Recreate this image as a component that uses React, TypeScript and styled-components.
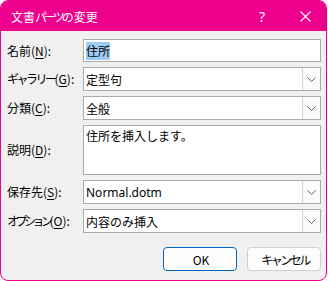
import React from "react";
import styled, { createGlobalStyle } from "styled-components";

const GlobalStyle = createGlobalStyle`
  body {
    margin: 0;
    background: #ffffff;
    font-family: "Noto Sans CJK JP", "Noto Sans", sans-serif;
  }
`;

const Dialog = styled.div`
  width: 327px;
  height: 281px;
  box-sizing: border-box;
  border: 1px solid #ec008c;
  border-radius: 8px;
  overflow: hidden;
  background: #f0f0f0;
  display: flex;
  flex-direction: column;
  font-size: 12px;
  color: #000;
`;

const TitleBar = styled.header`
  height: 30px;
  flex-shrink: 0;
  background: #ec008c;
  color: #fff;
  display: flex;
  align-items: center;
`;

const Title = styled.div`
  flex: 1;
  padding-left: 10px;
  font-size: 12px;
`;

const CaptionButton = styled.div<{ $w: number }>`
  width: ${(p) => p.$w}px;
  height: 30px;
  display: flex;
  align-items: center;
  justify-content: center;
  font-family: "Noto Sans", sans-serif;
  font-size: 14px;
`;

/* katakana runs are set tighter, like the proportional kana of the UI font */
const Kana = styled.span<{ $tight?: number }>`
  letter-spacing: ${(p) => p.$tight ?? -2.5}px;
`;

const Body = styled.div`
  padding: 8px 4px 0 6px;
`;

const Form = styled.div`
  display: grid;
  grid-template-columns: 76px 238px;
  row-gap: 5px;
  align-items: center;
`;

const Label = styled.label`
  white-space: nowrap;
  line-height: 16px;
`;

const Key = styled.span`
  text-decoration: underline;
  text-underline-offset: 2px;
`;

const TextBox = styled.div<{ $h: number; $multi?: boolean }>`
  height: ${(p) => p.$h}px;
  box-sizing: border-box;
  border: 1px solid #ababab;
  background: #fff;
  display: flex;
  align-items: ${(p) => (p.$multi ? "flex-start" : "center")};
  padding: ${(p) => (p.$multi ? "2px 2px 0" : "0 2px")};
  line-height: 16px;
`;

const Selected = styled.span`
  background: #9dcbf2;
  line-height: 18px;
`;

const Combo = styled.div`
  height: 24px;
  box-sizing: border-box;
  border: 1px solid #ababab;
  background: #fff;
  display: flex;
  align-items: stretch;
`;

const ComboValue = styled.div<{ $latin?: boolean }>`
  flex: 1;
  display: flex;
  align-items: center;
  padding-left: 2px;
  ${(p) => (p.$latin ? `font-family: "Noto Sans", sans-serif;` : "")}
`;

const DropButton = styled.div`
  width: 17px;
  border-left: 1px solid #d2d2d2;
  background: #fbfbfb;
  display: flex;
  align-items: center;
  justify-content: center;
`;

const ButtonRow = styled.div`
  display: flex;
  justify-content: flex-end;
  gap: 10px;
  margin-top: 14px;
  padding-right: 1px;
`;

const Button = styled.button<{ $primary?: boolean }>`
  width: 74px;
  height: 24px;
  box-sizing: border-box;
  border: 1px solid ${(p) => (p.$primary ? "#0067c0" : "#d0d0d0")};
  border-radius: 4px;
  background: #fdfdfd;
  font: inherit;
  font-size: 12px;
  color: #000;
  padding: 0 0 0 2px;
`;

const Chevron = () => (
  <svg width="9" height="5" viewBox="0 0 9 5">
    <path d="M0.5 0.5 L4.5 4.5 L8.5 0.5" fill="none" stroke="#606060" strokeWidth="1" />
  </svg>
);

const CloseIcon = () => (
  <svg width="11" height="11" viewBox="0 0 11 11">
    <path d="M0.5 0.5 L10.5 10.5 M10.5 0.5 L0.5 10.5" stroke="#fff" strokeWidth="1.1" />
  </svg>
);

const ComboBox = ({ value, latin }: { value: string; latin?: boolean }) => (
  <Combo>
    <ComboValue $latin={latin}>{value}</ComboValue>
    <DropButton>
      <Chevron />
    </DropButton>
  </Combo>
);

const App = () => {
  return (
    <>
      <GlobalStyle />
      <Dialog>
        <TitleBar>
          <Title>
            文書<Kana $tight={-3}>パーツ</Kana>の変更
          </Title>
          <CaptionButton $w={44}>?</CaptionButton>
          <CaptionButton $w={42}>
            <CloseIcon />
          </CaptionButton>
        </TitleBar>
        <Body>
          <Form>
            <Label>
              名前(<Key>N</Key>):
            </Label>
            <TextBox $h={23}>
              <Selected>住所</Selected>
            </TextBox>

            <Label>
              <Kana>ギャラリー</Kana>(<Key>G</Key>):
            </Label>
            <ComboBox value="定型句" />

            <Label>
              分類(<Key>C</Key>):
            </Label>
            <ComboBox value="全般" />

            <Label>
              説明(<Key>D</Key>):
            </Label>
            <TextBox $h={50} $multi>
              住所を挿入します。
            </TextBox>

            <Label>
              保存先(<Key>S</Key>):
            </Label>
            <ComboBox value="Normal.dotm" latin />

            <Label>
              <Kana $tight={-3.5}>オプション</Kana>(<Key>O</Key>):
            </Label>
            <ComboBox value="内容のみ挿入" />
          </Form>
          <ButtonRow>
            <Button $primary>OK</Button>
            <Button>
              <Kana>キャンセル</Kana>
            </Button>
          </ButtonRow>
        </Body>
      </Dialog>
    </>
  );
};

export default App;
